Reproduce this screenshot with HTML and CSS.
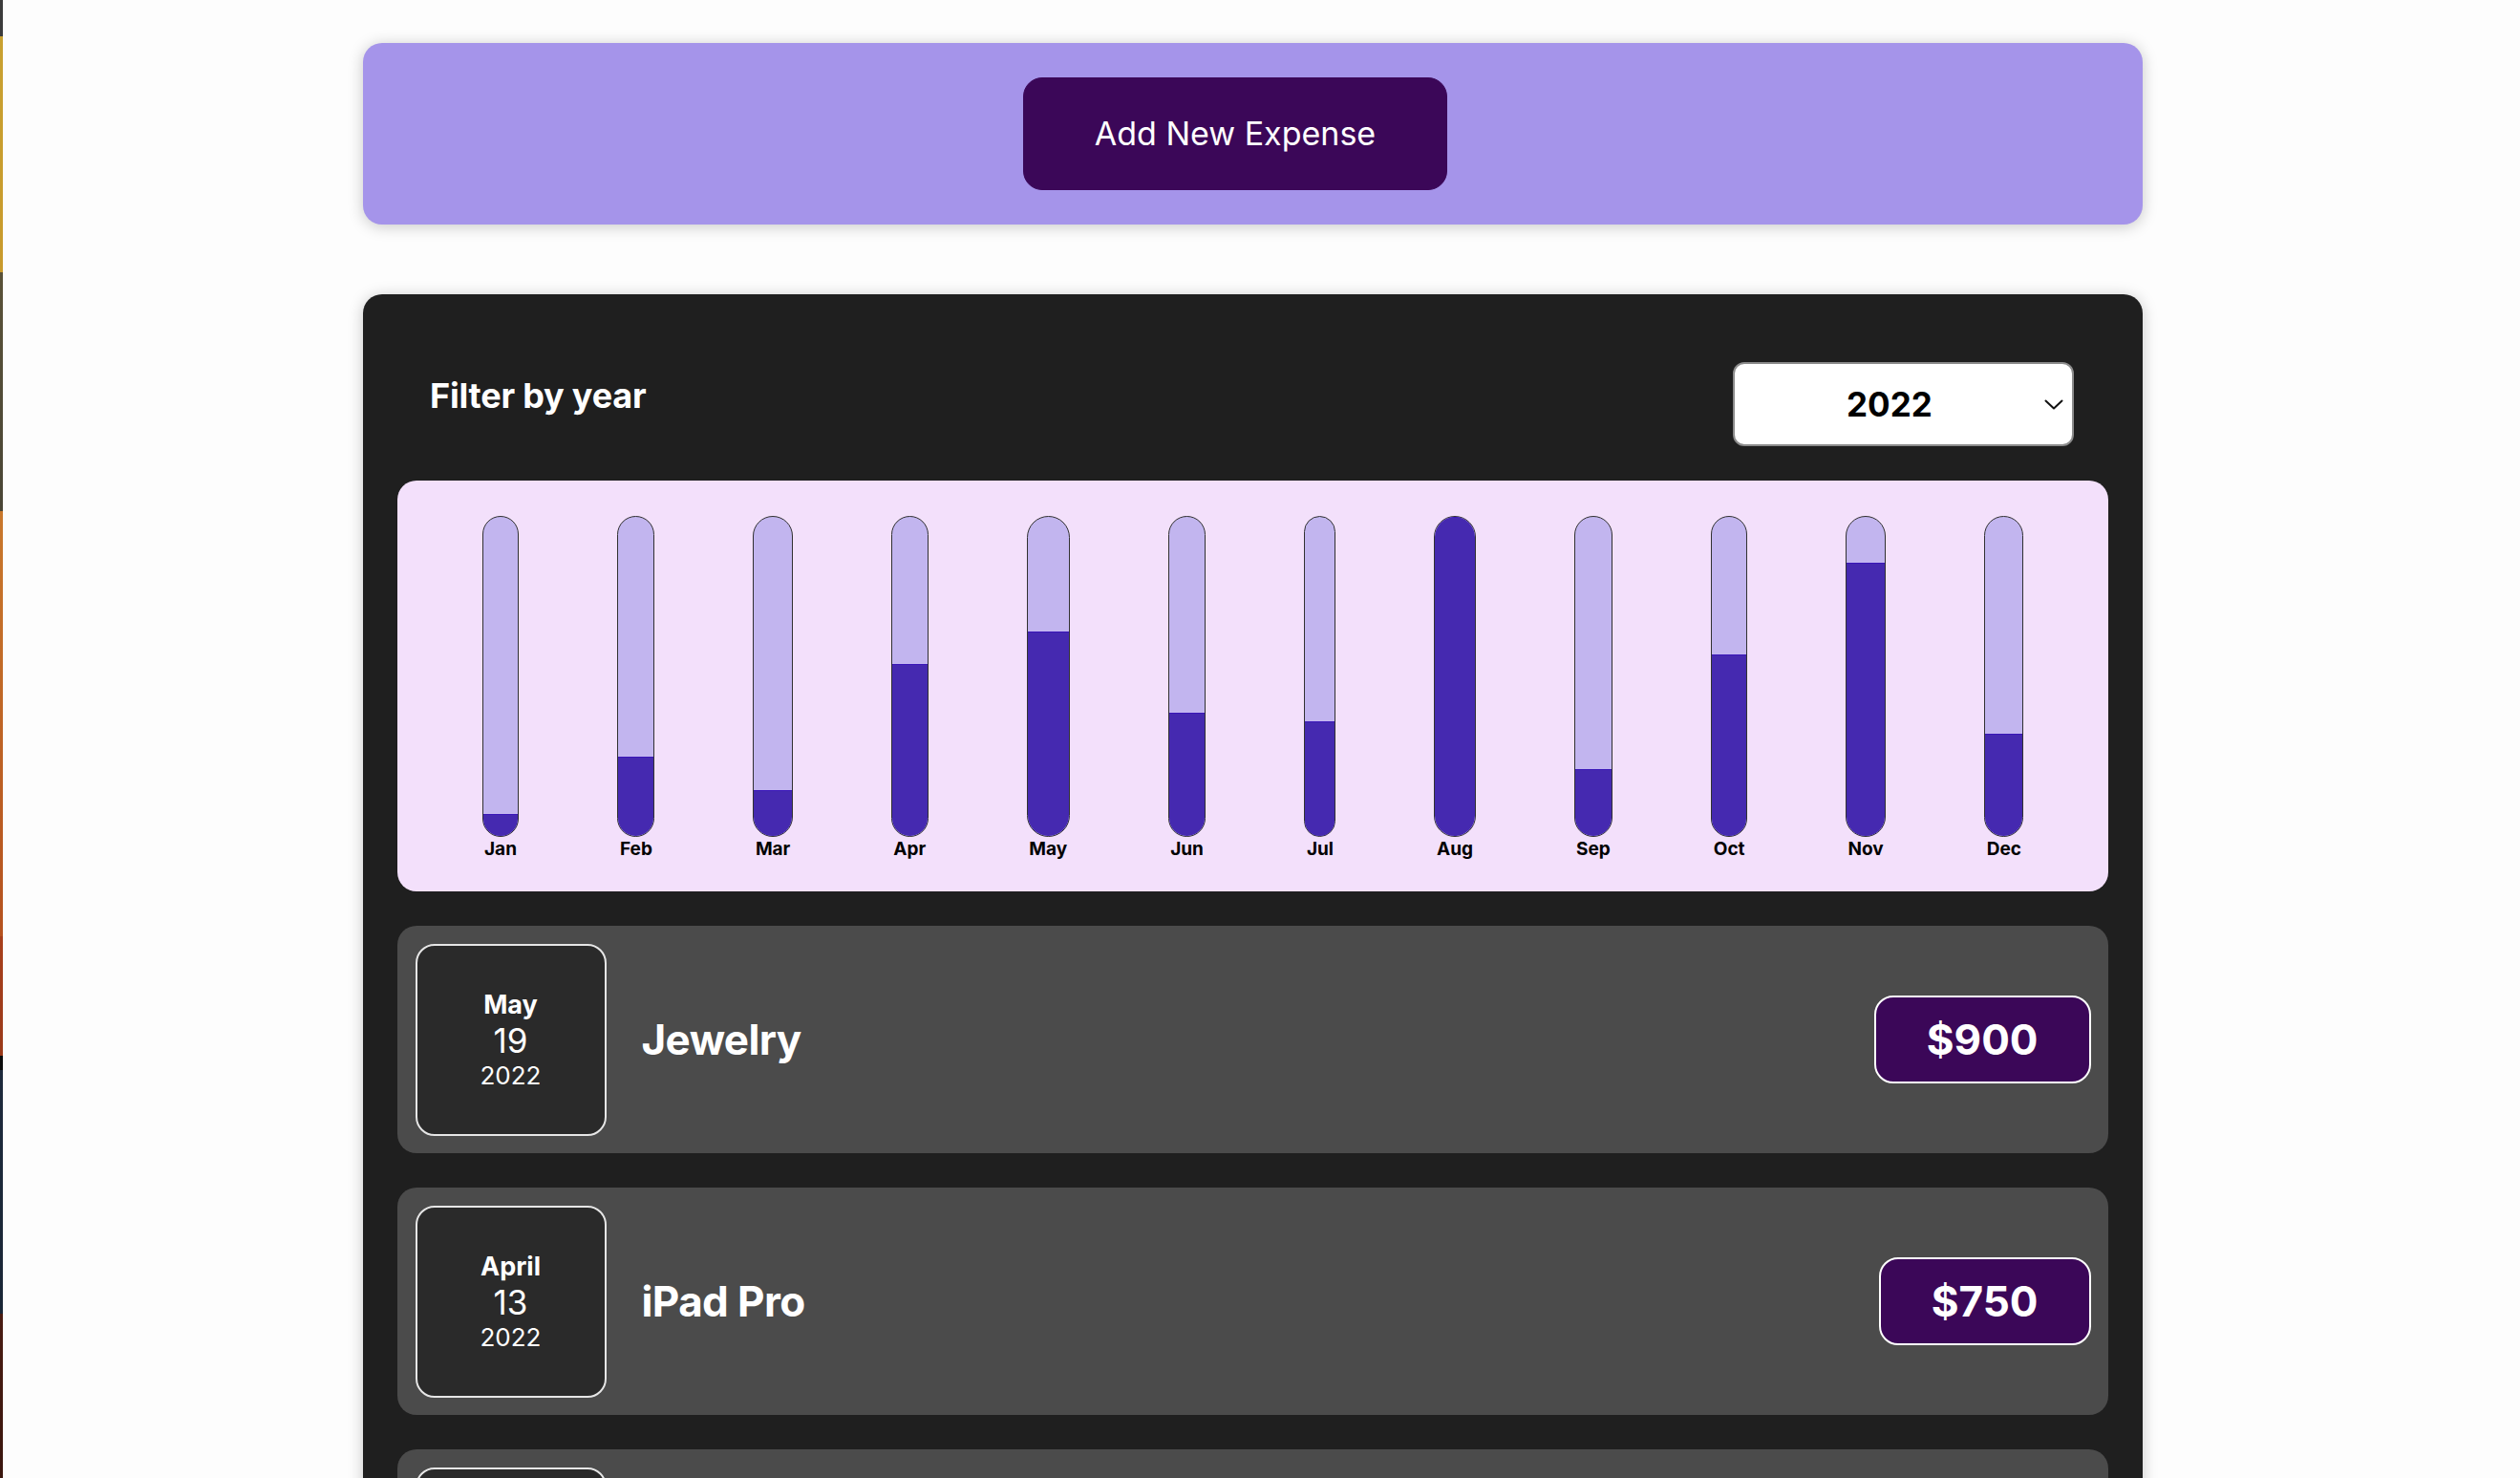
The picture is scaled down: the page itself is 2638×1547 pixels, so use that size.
FILE: index.html
```html
<!DOCTYPE html>
<html lang="en">
<head>
<meta charset="utf-8">
<title>Expenses</title>
<link rel="stylesheet" href="styles.css">
</head>
<body>
<div class="screen">
  <div class="edge"></div>
  <main class="app">
    <section class="new-expense">
      <button class="new-expense__btn" type="button">Add New Expense</button>
    </section>

    <section class="expenses">
      <div class="filter">
        <label class="filter__label" for="year">Filter by year</label>
        <div class="filter__select-wrap">
          <select id="year" class="filter__select">
            <option>2022</option>
            <option>2021</option>
            <option>2020</option>
            <option>2019</option>
          </select>
          <svg class="filter__chevron" viewBox="0 0 20 11" width="20" height="11" aria-hidden="true">
            <path d="M1.5 1.5 L10 9.5 L18.5 1.5" fill="none" stroke="#111" stroke-width="2" stroke-linecap="round" stroke-linejoin="round"/>
          </svg>
        </div>
      </div>

      <div class="chart">
        <div class="chart-bar"><div class="chart-bar__inner"><div class="chart-bar__fill" style="height:7%"></div></div><div class="chart-bar__label">Jan</div></div>
        <div class="chart-bar"><div class="chart-bar__inner"><div class="chart-bar__fill" style="height:24.8%"></div></div><div class="chart-bar__label">Feb</div></div>
        <div class="chart-bar"><div class="chart-bar__inner"><div class="chart-bar__fill" style="height:14.3%"></div></div><div class="chart-bar__label">Mar</div></div>
        <div class="chart-bar"><div class="chart-bar__inner"><div class="chart-bar__fill" style="height:53.9%"></div></div><div class="chart-bar__label">Apr</div></div>
        <div class="chart-bar"><div class="chart-bar__inner"><div class="chart-bar__fill" style="height:64%"></div></div><div class="chart-bar__label">May</div></div>
        <div class="chart-bar"><div class="chart-bar__inner"><div class="chart-bar__fill" style="height:38.7%"></div></div><div class="chart-bar__label">Jun</div></div>
        <div class="chart-bar"><div class="chart-bar__inner"><div class="chart-bar__fill" style="height:36%"></div></div><div class="chart-bar__label">Jul</div></div>
        <div class="chart-bar"><div class="chart-bar__inner"><div class="chart-bar__fill" style="height:100%"></div></div><div class="chart-bar__label">Aug</div></div>
        <div class="chart-bar"><div class="chart-bar__inner"><div class="chart-bar__fill" style="height:21%"></div></div><div class="chart-bar__label">Sep</div></div>
        <div class="chart-bar"><div class="chart-bar__inner"><div class="chart-bar__fill" style="height:57%"></div></div><div class="chart-bar__label">Oct</div></div>
        <div class="chart-bar"><div class="chart-bar__inner"><div class="chart-bar__fill" style="height:85.5%"></div></div><div class="chart-bar__label">Nov</div></div>
        <div class="chart-bar"><div class="chart-bar__inner"><div class="chart-bar__fill" style="height:32%"></div></div><div class="chart-bar__label">Dec</div></div>
      </div>

      <ul class="expense-list">
        <li class="expense-item">
          <div class="expense-date">
            <div class="expense-date__month">May</div>
            <div class="expense-date__day">19</div>
            <div class="expense-date__year">2022</div>
          </div>
          <h2 class="expense-item__title">Jewelry</h2>
          <div class="expense-item__price">$900</div>
        </li>
        <li class="expense-item">
          <div class="expense-date">
            <div class="expense-date__month">April</div>
            <div class="expense-date__day">13</div>
            <div class="expense-date__year">2022</div>
          </div>
          <h2 class="expense-item__title">iPad Pro</h2>
          <div class="expense-item__price">$750</div>
        </li>
        <li class="expense-item">
          <div class="expense-date">
            <div class="expense-date__month">March</div>
            <div class="expense-date__day">2</div>
            <div class="expense-date__year">2022</div>
          </div>
          <h2 class="expense-item__title">Headphones</h2>
          <div class="expense-item__price">$320</div>
        </li>
      </ul>
    </section>
  </main>
</div>
</body>
</html>
```

FILE: styles.css
```css
* {
  box-sizing: border-box;
}

html,
body {
  margin: 0;
  padding: 0;
}

body {
  background: #fdfdfd;
  font-family: Inter, "Noto Sans", "Liberation Sans", sans-serif;
}

.screen {
  position: relative;
  height: 1547px;
  overflow: hidden;
  padding: 45px 15px 0 0;
  background: #fdfdfd;
}

.edge {
  position: absolute;
  left: 0;
  top: 0;
  bottom: 0;
  width: 3px;
  background: linear-gradient(
    to bottom,
    #3c3c3c 0px, #3c3c3c 38px,
    #c9a130 38px, #c99a2c 285px,
    #5a5238 285px, #4a4636 535px,
    #c9782c 535px, #b5521f 980px,
    #a8401c 980px, #9a3a1a 1105px,
    #0c0c0c 1105px, #0c0c0c 1120px,
    #1d2a3c 1120px, #1a2636 1375px,
    #4a1c12 1375px, #3a160e 1547px
  );
}

.app {
  width: 1863px;
  margin: 0 auto;
}

/* ---------- New expense header ---------- */
.new-expense {
  background: #a594ea;
  padding: 36px;
  border-radius: 20px;
  text-align: center;
  box-shadow: 0 2px 16px rgba(0, 0, 0, 0.22);
}

.new-expense__btn {
  font-family: Inter, "Noto Sans", sans-serif;
  font-size: 34px;
  line-height: 44px;
  font-weight: 400;
  color: #ffffff;
  background: #3b0758;
  border: 1px solid #3b0758;
  border-radius: 20px;
  padding: 36px 74px;
  margin: 0 37px 0 0;
  cursor: pointer;
}

/* ---------- Expenses card ---------- */
.expenses {
  margin-top: 73px;
  background: #1f1f1f;
  padding: 36px 36px;
  border-radius: 20px;
  box-shadow: 0 2px 16px rgba(0, 0, 0, 0.22);
}

.filter {
  display: flex;
  align-items: center;
  justify-content: space-between;
  margin: 35px 0 36px;
  padding: 0 36px 0 34px;
  color: #ffffff;
}

.filter__label {
  font-size: 36px;
  line-height: 44px;
  font-weight: 700;
  letter-spacing: -0.2px;
  margin-bottom: 18px;
}

.filter__select-wrap {
  position: relative;
  width: 357px;
  height: 88px;
}

.filter__select {
  appearance: none;
  -webkit-appearance: none;
  width: 100%;
  height: 100%;
  font-family: Inter, "Noto Sans", sans-serif;
  font-size: 35px;
  font-weight: 700;
  color: #000000;
  background: #ffffff;
  border: 2px solid #8c8c8c;
  border-radius: 12px;
  padding: 0 0 0 117px;
}

.filter__chevron {
  position: absolute;
  right: 11px;
  top: 39px;
  width: 20px;
  height: 11px;
  pointer-events: none;
}

/* ---------- Chart ---------- */
.chart {
  height: 430px;
  padding: 37px;
  border-radius: 20px;
  background: #f3e0fb;
  display: flex;
  justify-content: space-around;
}

.chart-bar {
  height: 100%;
  display: flex;
  flex-direction: column;
  align-items: center;
}

.chart-bar__inner {
  flex: 1;
  width: 100%;
  border: 1px solid #313131;
  border-radius: 999px;
  background: #c2b5ef;
  overflow: hidden;
  display: flex;
  flex-direction: column;
  justify-content: flex-end;
}

.chart-bar__fill {
  width: 100%;
  background: #4529b0;
  border-top: 1px solid #3a17b8;
}

.chart-bar__label {
  font-size: 19px;
  line-height: 20px;
  font-weight: 700;
  color: #000000;
  padding: 3px 2.5px 0;
  margin-bottom: -3px;
}

/* ---------- Expense list ---------- */
.expense-list {
  list-style: none;
  margin: 0;
  padding: 0;
}

.expense-item {
  display: flex;
  align-items: center;
  margin: 36px 0;
  padding: 18.5px;
  border-radius: 20px;
  background: #4b4b4b;
}

.expense-date {
  flex: 0 0 auto;
  width: 200px;
  height: 201px;
  display: flex;
  flex-direction: column;
  align-items: center;
  justify-content: center;
  border: 2px solid #e6e6e6;
  border-radius: 20px;
  background: #2a2a2a;
  color: #ffffff;
}

.expense-date__month {
  font-size: 27px;
  line-height: 33px;
  font-weight: 700;
}

.expense-date__day {
  font-size: 35px;
  line-height: 42px;
  font-weight: 400;
}

.expense-date__year {
  font-size: 26px;
  line-height: 32px;
  font-weight: 400;
}

.expense-item__title {
  flex: 1;
  margin: 0 37px;
  font-size: 44px;
  letter-spacing: -0.6px;
  font-weight: 700;
  color: #ffffff;
}

.expense-item__price {
  font-size: 44px;
  line-height: 52px;
  font-weight: 700;
  color: #ffffff;
  background: #3b0758;
  border: 2px solid #ffffff;
  border-radius: 20px;
  padding: 18px 53px;
}
```
